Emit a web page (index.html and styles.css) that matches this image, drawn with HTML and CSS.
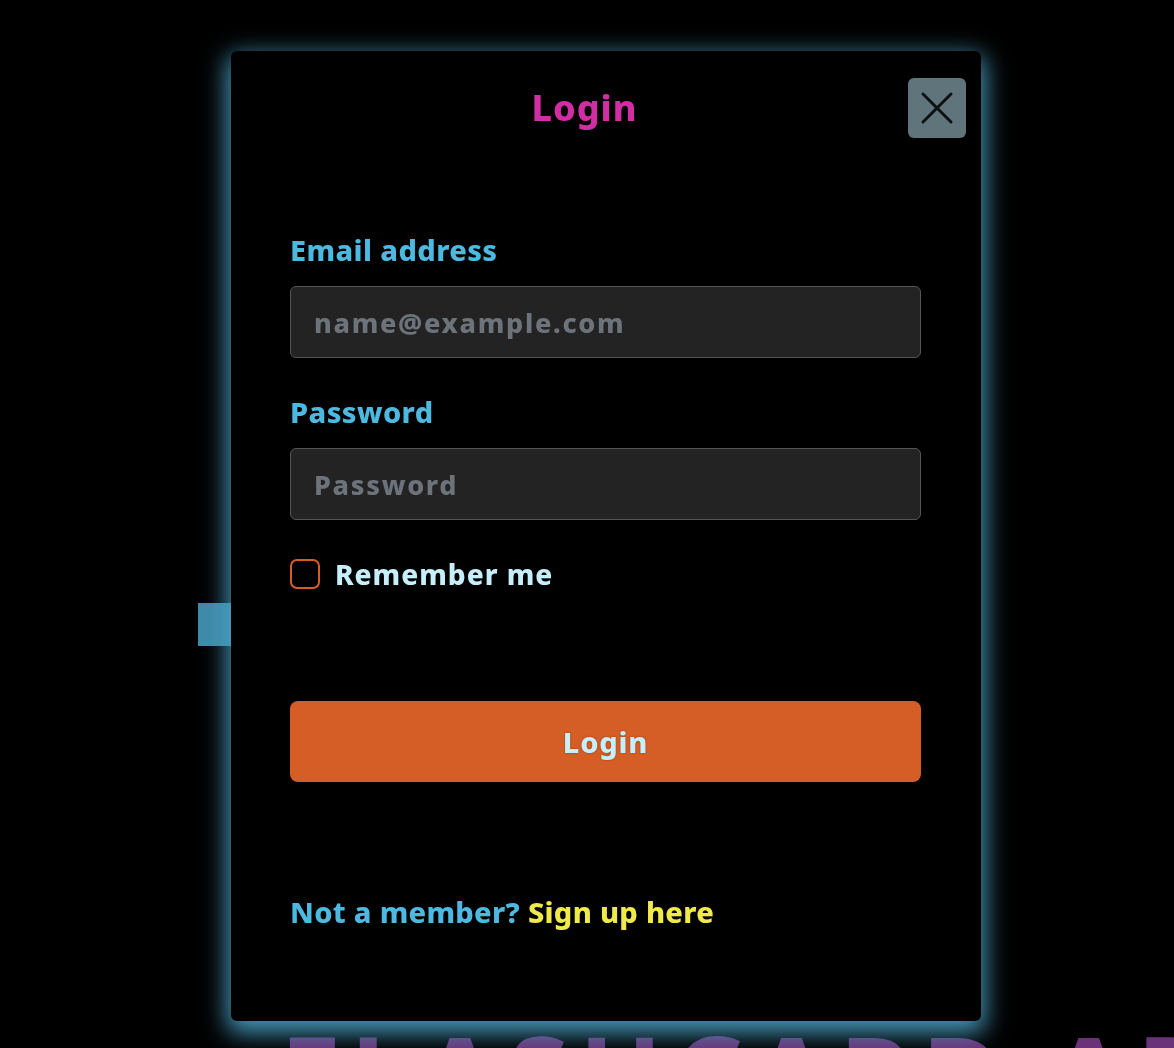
FILE: index.html
```html
<!DOCTYPE html>
<html lang="en">
<head>
<meta charset="utf-8">
<title>Login</title>
<link rel="stylesheet" href="styles.css">
</head>
<body>
<div class="page">
  <div class="page-btn"></div>
  <h1 class="page-title">FLASHCARD APP</h1>
</div>
<div class="modal">
  <div class="dialog">
    <div class="header">
      <h2 class="title">Login</h2>
      <button class="close" type="button" aria-label="Close">
        <svg width="34" height="34" viewBox="0 0 34 34"><path d="M3 3 L31 31 M31 3 L3 31" stroke="#0d1112" stroke-width="3" stroke-linecap="round" fill="none"/></svg>
      </button>
    </div>
    <form class="body">
      <label class="label" for="email">Email address</label>
      <input class="input" id="email" type="email" placeholder="name@example.com">
      <label class="label label-2" for="pw">Password</label>
      <input class="input" id="pw" type="password" placeholder="Password">
      <div class="check-row">
        <span class="check"></span>
        <span class="check-text">Remember me</span>
      </div>
      <button class="submit" type="button">Login</button>
      <p class="footer">Not a member? <a class="signup" href="#">Sign up here</a></p>
    </form>
  </div>
</div>
</body>
</html>
```
FILE: styles.css
```css
html, body {
  margin: 0;
  padding: 0;
  background: #000;
  height: 100%;
  overflow: hidden;
}
body {
  font-family: "Noto Sans", "Open Sans", sans-serif;
  font-weight: 800;
}
.page {
  padding-top: 603px;
}
.page-btn {
  margin-left: 198px;
  width: 80px;
  height: 43px;
  background: #3f8aa8;
}
.page-title {
  margin: 372px 0 0 280px;
  font-size: 110px;
  line-height: 1;
  color: #6a3278;
  letter-spacing: 10px;
  white-space: nowrap;
}
.modal {
  position: fixed;
  inset: 0;
}
.dialog {
  margin: 51px 0 0 231px;
  width: 750px;
  height: 970px;
  box-sizing: border-box;
  background: #000;
  border-radius: 6px;
  box-shadow: 0 8px 24px 4px rgba(74, 160, 195, 0.95);
  text-shadow: 0 0 2px rgba(0, 0, 0, 0.6);
}
.header {
  display: flex;
  align-items: center;
  padding: 27px 15px 0 30px;
}
.title {
  flex: 1;
  margin: 0;
  text-align: center;
  font-size: 36px;
  line-height: 60px;
  letter-spacing: 1px;
  color: #d12ea4;
  font-weight: 800;
}
.close {
  width: 58px;
  height: 60px;
  padding: 0;
  border: none;
  border-radius: 6px;
  background: #5f757b;
  display: flex;
  align-items: center;
  justify-content: center;
}
.body {
  display: flex;
  flex-direction: column;
  padding: 93px 60px 0 59px;
}
.label {
  font-size: 29px;
  line-height: 38px;
  color: #4cb9e0;
  letter-spacing: 0.4px;
}
.label-2 {
  margin-top: 35px;
}
.input {
  margin-top: 17px;
  height: 72px;
  box-sizing: border-box;
  background: #232323;
  border: 1.5px solid #555;
  border-radius: 6px;
  padding: 0 23px;
  font-family: inherit;
  font-weight: 800;
  font-size: 27px;
  letter-spacing: 1.7px;
  color: #ddd;
  outline: none;
}
.input::placeholder {
  color: #6c737b;
}
.check-row {
  display: flex;
  align-items: center;
  margin-top: 36px;
  gap: 15px;
}
.check {
  width: 30px;
  height: 30px;
  box-sizing: border-box;
  border: 2px solid #d55e26;
  border-radius: 7px;
}
.check-text {
  font-size: 28px;
  line-height: 36px;
  letter-spacing: 1px;
  color: #c6eefb;
}
.submit {
  margin-top: 109px;
  height: 81px;
  border: none;
  border-radius: 8px;
  background: #d55e26;
  color: #c6eefb;
  font-family: inherit;
  font-weight: 800;
  font-size: 29px;
  letter-spacing: 0.8px;
  text-shadow: 0 0 2px rgba(120, 30, 0, 0.7);
}
.footer {
  margin: 111px 0 0;
  font-size: 29px;
  line-height: 38px;
  letter-spacing: 0.3px;
  color: #4cb9e0;
}
.signup {
  color: #efe94a;
  text-decoration: none;
}
```
